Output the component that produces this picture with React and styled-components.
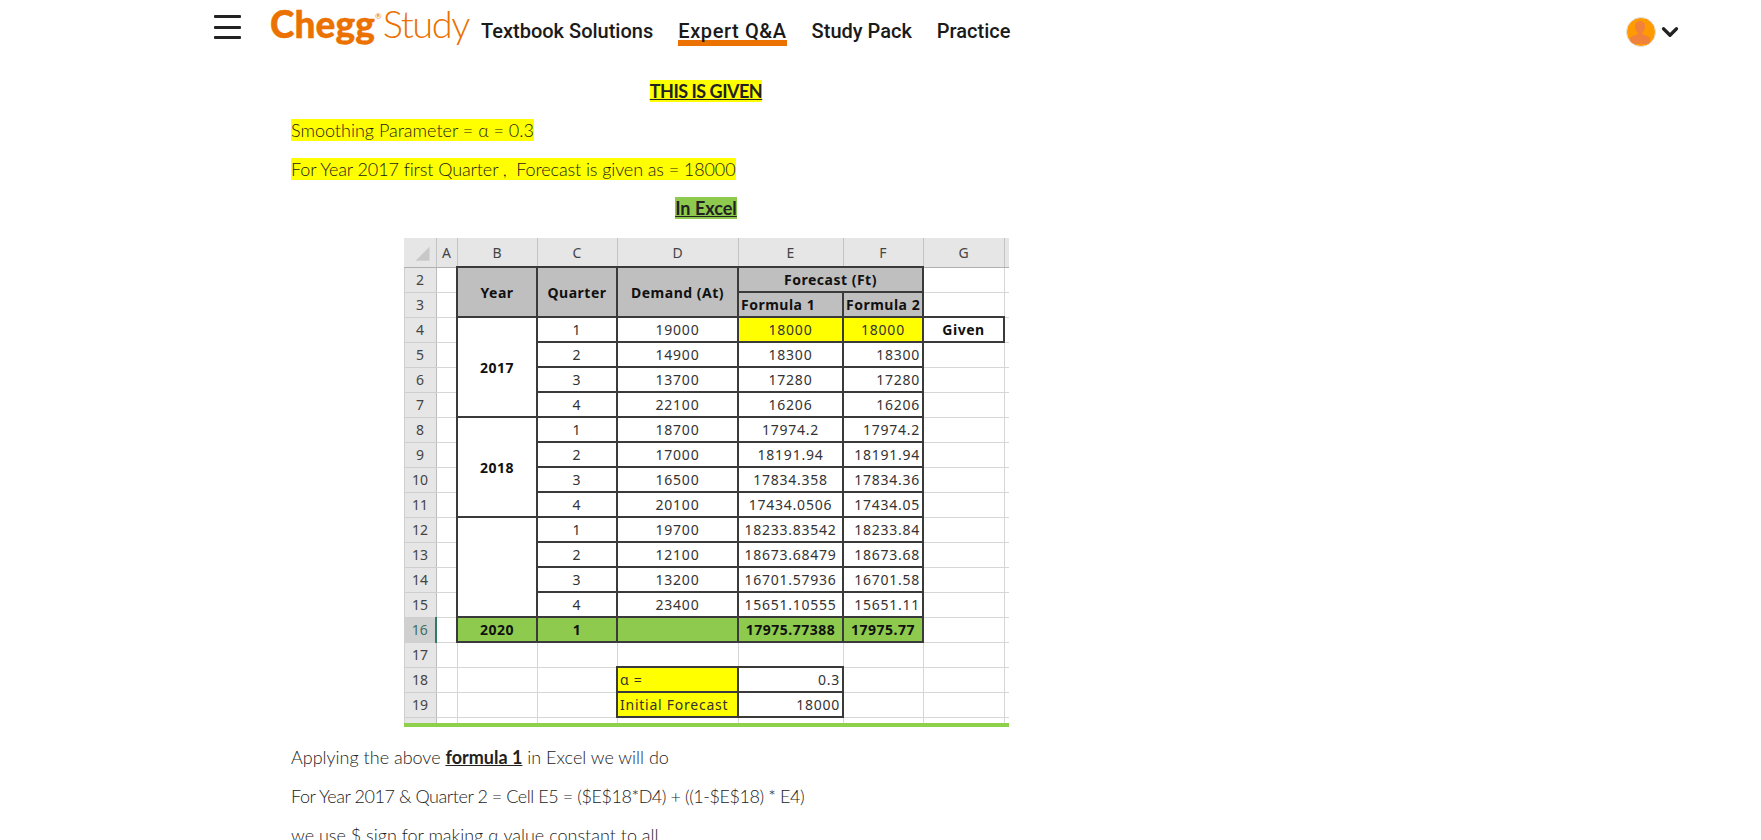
import React from 'react';
import styled, { createGlobalStyle } from 'styled-components';
import { ChevronDown } from 'lucide-react';

const Global = createGlobalStyle`
  html, body {
    margin: 0;
    height: 840px;
    overflow: hidden;
    background: #fff;
  }
`;

const Page = styled.div`
  font-family: Lato, "Open Sans", sans-serif;
  color: #333;
`;

const Header = styled.header`
  display: flex;
  align-items: flex-start;
  height: 79px;
  padding-left: 214px;
  padding-right: 78px;
`;

const MenuButton = styled.div`
  display: flex;
  flex-direction: column;
  gap: 7.5px;
  width: 27px;
  margin-top: 15px;
  margin-right: 29px;
`;

const MenuLine = styled.span`
  display: block;
  height: 3px;
  background: #222;
  border-radius: 1px;
`;

const Logo = styled.div`
  display: flex;
  align-items: baseline;
  width: 211px;
  height: 46px;
  color: #eb7100;
  line-height: 46px;
`;

const LogoChegg = styled.span`
  font-weight: 900;
  font-size: 37px;
  letter-spacing: 0.1px;
  -webkit-text-stroke: 0.4px #eb7100;
`;

const LogoMark = styled.span`
  font-size: 8px;
  align-self: flex-start;
  margin: 1px 1px 0 0;
  line-height: 30px;
`;

const LogoStudy = styled.span`
  font-weight: 300;
  font-size: 38px;
  letter-spacing: -1.4px;
`;

const Nav = styled.nav`
  display: flex;
  gap: 25px;
  flex: 1;
`;

const NavItem = styled.a`
  display: block;
  box-sizing: border-box;
  padding-top: 18px;
  font-family: Roboto, sans-serif;
  font-weight: 500;
  font-size: 20px;
  line-height: 26px;
  color: #1a1a1a;
  letter-spacing: ${p => (p.$active ? '0.6px' : '0')};
  border-bottom: ${p => (p.$active ? '6px solid #eb7100' : '0')};
  height: ${p => (p.$active ? '46px' : 'auto')};
`;

const UserMenu = styled.div`
  display: flex;
  align-items: center;
  gap: 1px;
  margin-top: 17px;
  color: #222;
`;

const Avatar = styled.div`
  width: 28px;
  height: 28px;
  border-radius: 50%;
  overflow: hidden;
  background: #ff9a00;
  border: 1px solid #e4e4e4;
`;

const Main = styled.main`
  width: 830px;
  margin-left: 291px;
`;

const Para = styled.p`
  margin: 0 0 15px;
  font-size: 18px;
  font-weight: 300;
  line-height: 24px;
  color: #222;
  letter-spacing: ${p => p.$spacing || 0}px;
  text-align: ${p => (p.$center ? 'center' : 'left')};
  white-space: pre-wrap;
`;

const Mark = styled.span`
  background: ${p => p.$bg || '#ffff00'};
  color: #1a1a1a;
`;

const Strong = styled.strong`
  font-weight: 700;
  text-decoration: underline;
  color: #222;
  letter-spacing: ${p => (p.$tight ? '-0.5px' : '0')};
`;

const Sheet = styled.div`
  width: 605px;
  height: 485px;
  margin: 18px auto 18px;
  border-bottom: 4px solid #8ed04b;
  overflow: hidden;
`;

const Table = styled.table`
  border-collapse: collapse;
  table-layout: fixed;
  width: 605px;
  font-family: "Noto Sans", sans-serif;
  font-size: 14px;
  color: #333;
`;

const Row = styled.tr`
  height: ${p => p.$h || 25}px;
`;

const Cell = styled.td`
  box-sizing: border-box;
  padding: 0 2px;
  white-space: nowrap;
  overflow: hidden;
  letter-spacing: ${p => (p.$bold ? '0.5px' : '0.75px')};
  text-align: ${p => p.$align || 'center'};
  font-weight: ${p => (p.$bold ? 700 : 400)};
  background: ${p => p.$bg || '#fff'};
  color: ${p => (p.$bold ? '#111' : '#333')};
  border: ${p => (p.$dark ? '2px solid #3a3a3a' : '1px solid #d6d6d6')};
`;

const RowHead = styled.td`
  padding: 0;
  text-align: center;
  color: ${p => (p.$on ? '#3f6f62' : '#444')};
  background: ${p => (p.$on ? '#d0d0d0' : '#e6e6e6')};
  border: 1px solid #cfcfcf;
  border-right: ${p => (p.$on ? '2px solid #2f7d5f' : '1px solid #bdbdbd')};
`;

const ColHead = styled.td`
  text-align: center;
  color: #444;
  background: #e6e6e6;
  border-right: 1px solid #c4c4c4;
  border-bottom: 1px solid #b0b0b0;
`;

const Corner = styled.div`
  width: 14px;
  height: 14px;
  margin: 3px 5px 0 auto;
  background: #c8c8c8;
  clip-path: polygon(100% 0, 100% 100%, 0 100%);
`;

const widths = [32, 21, 80, 80, 121, 105, 80, 81, 5];
const letters = ['A', 'B', 'C', 'D', 'E', 'F', 'G'];
const GREY = '#bfbfbf';
const GREEN = '#8dca4e';
const YELLOW = '#ffff00';

const dataRows = [
  { n: 4, q: 1, d: 19000, e: '18000', f: '18000', first: '2017' },
  { n: 5, q: 2, d: 14900, e: '18300', f: '18300' },
  { n: 6, q: 3, d: 13700, e: '17280', f: '17280' },
  { n: 7, q: 4, d: 22100, e: '16206', f: '16206' },
  { n: 8, q: 1, d: 18700, e: '17974.2', f: '17974.2', first: '2018' },
  { n: 9, q: 2, d: 17000, e: '18191.94', f: '18191.94' },
  { n: 10, q: 3, d: 16500, e: '17834.358', f: '17834.36' },
  { n: 11, q: 4, d: 20100, e: '17434.0506', f: '17434.05' },
  { n: 12, q: 1, d: 19700, e: '18233.83542', f: '18233.84', first: ' ' },
  { n: 13, q: 2, d: 12100, e: '18673.68479', f: '18673.68' },
  { n: 14, q: 3, d: 13200, e: '16701.57936', f: '16701.58' },
  { n: 15, q: 4, d: 23400, e: '15651.10555', f: '15651.11' },
];

const Blank = () => (
  <>
    <Cell />
    <Cell />
  </>
);

const Sheetview = () => (
  <Sheet>
    <Table>
      <colgroup>
        {widths.map((w, i) => (
          <col key={i} style={{ width: w }} />
        ))}
      </colgroup>
      <tbody>
        <Row $h={29}>
          <ColHead><Corner /></ColHead>
          {letters.map(l => (
            <ColHead key={l}>{l}</ColHead>
          ))}
          <ColHead />
        </Row>
        <Row>
          <RowHead>2</RowHead>
          <Cell />
          <Cell $dark $bold $bg={GREY} rowSpan={2}>Year</Cell>
          <Cell $dark $bold $bg={GREY} rowSpan={2}>Quarter</Cell>
          <Cell $dark $bold $bg={GREY} rowSpan={2}>Demand (At)</Cell>
          <Cell $dark $bold $bg={GREY} colSpan={2}>Forecast (Ft)</Cell>
          <Blank />
        </Row>
        <Row>
          <RowHead>3</RowHead>
          <Cell />
          <Cell $dark $bold $bg={GREY} $align="left">Formula 1</Cell>
          <Cell $dark $bold $bg={GREY} $align="left">Formula 2</Cell>
          <Blank />
        </Row>
        {dataRows.map(r => (
          <Row key={r.n}>
            <RowHead>{r.n}</RowHead>
            <Cell />
            {r.first && <Cell $dark $bold rowSpan={4}>{r.first}</Cell>}
            <Cell $dark>{r.q}</Cell>
            <Cell $dark>{r.d}</Cell>
            <Cell $dark $bg={r.n === 4 ? YELLOW : undefined}>{r.e}</Cell>
            <Cell $dark $bg={r.n === 4 ? YELLOW : undefined} $align={r.n === 4 ? 'center' : 'right'}>{r.f}</Cell>
            {r.n === 4 ? <Cell $dark $bold>Given</Cell> : <Cell />}
            <Cell />
          </Row>
        ))}
        <Row>
          <RowHead $on>16</RowHead>
          <Cell />
          <Cell $dark $bold $bg={GREEN}>2020</Cell>
          <Cell $dark $bold $bg={GREEN}>1</Cell>
          <Cell $dark $bg={GREEN} />
          <Cell $dark $bold $bg={GREEN}>17975.77388</Cell>
          <Cell $dark $bold $bg={GREEN}>17975.77</Cell>
          <Blank />
        </Row>
        <Row>
          <RowHead>17</RowHead>
          <Cell /><Cell /><Cell /><Cell /><Cell /><Cell /><Cell /><Cell />
        </Row>
        <Row>
          <RowHead>18</RowHead>
          <Cell /><Cell /><Cell />
          <Cell $dark $bg={YELLOW} $align="left">α =</Cell>
          <Cell $dark $align="right">0.3</Cell>
          <Cell /><Cell /><Cell />
        </Row>
        <Row>
          <RowHead>19</RowHead>
          <Cell /><Cell /><Cell />
          <Cell $dark $bg={YELLOW} $align="left">Initial Forecast</Cell>
          <Cell $dark $align="right">18000</Cell>
          <Cell /><Cell /><Cell />
        </Row>
        <Row $h={6}>
          <RowHead />
          <Cell /><Cell /><Cell /><Cell /><Cell /><Cell /><Cell /><Cell />
        </Row>
      </tbody>
    </Table>
  </Sheet>
);

export default function App() {
  return (
    <Page>
      <Global />
      <Header>
        <MenuButton>
          <MenuLine />
          <MenuLine />
          <MenuLine />
        </MenuButton>
        <Logo>
          <LogoChegg>Chegg</LogoChegg>
          <LogoMark>®</LogoMark>
          <LogoStudy>Study</LogoStudy>
        </Logo>
        <Nav>
          <NavItem>Textbook Solutions</NavItem>
          <NavItem $active>Expert Q&amp;A</NavItem>
          <NavItem>Study Pack</NavItem>
          <NavItem>Practice</NavItem>
        </Nav>
        <UserMenu>
          <Avatar>
            <svg width="26" height="26" viewBox="0 0 26 26">
              <path d="M13 3c3.2 0 5 2.400 5 5.600 0 2.600-1 4.800-2.600 6v1.600c3 .9 6 2 7.600 3.800v7H3v-7c1.600-1.800 4.600-2.900 7.600-3.800v-1.600C9 13.400 8 11.200 8 8.600 8 5.400 9.800 3 13 3z" fill="#f0823c" />
            </svg>
          </Avatar>
          <ChevronDown size={26} strokeWidth={3} />
        </UserMenu>
      </Header>
      <Main>
        <Para $center><Mark><Strong $tight>THIS IS GIVEN</Strong></Mark></Para>
        <Para><Mark>Smoothing Parameter = α = 0.3</Mark></Para>
        <Para $spacing={-0.1}><Mark>For Year 2017 first Quarter ,  Forecast is given as = 18000</Mark></Para>
        <Para $center><Mark $bg="#8dca4e"><Strong>In Excel</Strong></Mark></Para>
        <Sheetview />
        <Para>Applying the above <Strong>formula 1</Strong> in Excel we will do</Para>
        <Para $spacing={-0.44}>For Year 2017 &amp; Quarter 2 = Cell E5 = ($E$18*D4) + ((1-$E$18) * E4)</Para>
        <Para>we use $ sign for making α value constant to all</Para>
      </Main>
    </Page>
  );
}
